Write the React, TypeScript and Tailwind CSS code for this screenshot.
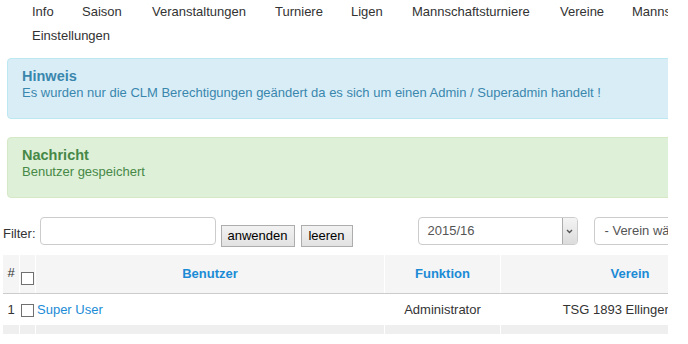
import { ReactElement } from "react";

const navItems: { label: string; w: string }[] = [
  { label: "Info", w: "w-[50px]" },
  { label: "Saison", w: "w-[70px]" },
  { label: "Veranstaltungen", w: "w-[123px]" },
  { label: "Turniere", w: "w-[76px]" },
  { label: "Ligen", w: "w-[61px]" },
  { label: "Mannschaftsturniere", w: "w-[148px]" },
  { label: "Vereine", w: "w-[72px]" },
  { label: "Mannschaften", w: "w-[110px]" },
  { label: "Einstellungen", w: "w-[110px]" },
];

function Checkbox(): ReactElement {
  return <span className="block w-[13px] h-[13px] border border-[#707070] bg-white" />;
}

export default function App(): ReactElement {
  return (
    <div className="w-[668px] h-[344px] overflow-hidden bg-white font-['Liberation_Sans',Arial,sans-serif] text-[13px] text-[#333]">
      <div className="w-[780px]">
        <ul className="flex flex-wrap pl-[32px] leading-[24px]">
          {navItems.map((item) => (
            <li key={item.label} className={`${item.w} whitespace-nowrap`}>
              {item.label}
            </li>
          ))}
        </ul>

        <div className="ml-[7px] mt-[10px] h-[61px] border border-[#bce8f1] rounded-[4px] bg-[#d9edf7] text-[#3a87ad] pl-[14px] pt-[8px]">
          <p className="font-bold text-[14.5px] leading-[18px]">Hinweis</p>
          <p className="leading-[16px]">
            Es wurden nur die CLM Berechtigungen geändert da es sich um einen Admin / Superadmin handelt !
          </p>
        </div>

        <div className="ml-[7px] mt-[18px] h-[61px] border border-[#d6e9c6] rounded-[4px] bg-[#dff0d8] text-[#468847] pl-[14px] pt-[8px]">
          <p className="font-bold text-[14.5px] leading-[18px]">Nachricht</p>
          <p className="leading-[16px]">Benutzer gespeichert</p>
        </div>

        <div className="flex items-start mt-[19px] pl-[3px]">
          <span className="mt-[9px] leading-[16px]">Filter:</span>
          <div className="ml-[4px] w-[176px] h-[28px] border border-[#ccc] rounded-[4px] bg-white" />
          <button className="ml-[5px] mt-[8px] h-[22px] w-[74px] border border-[#adadad] bg-gradient-to-b from-[#f2f2f2] to-[#e2e2e2] text-black leading-[20px]">
            anwenden
          </button>
          <button className="ml-[6px] mt-[8px] h-[22px] w-[52px] border border-[#adadad] bg-gradient-to-b from-[#f2f2f2] to-[#e2e2e2] text-black leading-[20px]">
            leeren
          </button>
          <div className="ml-[65px] w-[160px] h-[28px] border border-[#ccc] rounded-[4px] bg-white flex items-stretch overflow-hidden">
            <span className="flex-1 pl-[9px] leading-[26px] text-[#555]">2015/16</span>
            <span className="w-[15px] border-l border-[#acacac] bg-gradient-to-b from-[#f4f4f4] to-[#dcdcdc] flex items-center justify-center">
              <svg width="7" height="5" viewBox="0 0 7 5">
                <path d="M1 1 L3.5 3.5 L6 1" fill="none" stroke="#555" strokeWidth="1.4" />
              </svg>
            </span>
          </div>
          <div className="ml-[16px] w-[160px] h-[28px] border border-[#ccc] rounded-[4px] bg-white pl-[10px] leading-[26px] text-[#555] whitespace-nowrap">
            - Verein wählen -
          </div>
        </div>

        <div className="mt-[8px] ml-[3px]">
          <div className="grid grid-cols-[16px_15px_348px_115px_258px] gap-x-[1px] h-[38px]">
            <div className="bg-[#f5f5f5] flex items-center justify-center pb-[2px]">#</div>
            <div className="bg-[#f5f5f5] flex items-center pt-[8px] pl-[1px]">
              <Checkbox />
            </div>
            <div className="bg-[#f5f5f5] flex items-center justify-center font-bold text-[#1b8bd6]">Benutzer</div>
            <div className="bg-[#f5f5f5] flex items-center justify-center font-bold text-[#1b8bd6]">Funktion</div>
            <div className="bg-[#f5f5f5] flex items-center justify-center font-bold text-[#1b8bd6]">Verein</div>
          </div>
          <div className="h-px bg-[#cccccc]" />
          <div className="grid grid-cols-[16px_15px_348px_115px_258px] gap-x-[1px] h-[31px]">
            <div className="flex items-center justify-center">1</div>
            <div className="flex items-center pl-[1px] pt-[2px]">
              <Checkbox />
            </div>
            <div className="flex items-center pl-[1px] text-[#1b8bd6]">Super User</div>
            <div className="flex items-center justify-center">Administrator</div>
            <div className="flex items-center justify-center whitespace-nowrap">TSG 1893 Ellingen e.V.</div>
          </div>
          <div className="grid grid-cols-[16px_15px_348px_115px_258px] gap-x-[1px] h-[9px]">
            <div className="bg-[#efefef]" />
            <div className="bg-[#efefef]" />
            <div className="bg-[#efefef]" />
            <div className="bg-[#efefef]" />
            <div className="bg-[#efefef]" />
          </div>
        </div>
      </div>
    </div>
  );
}
